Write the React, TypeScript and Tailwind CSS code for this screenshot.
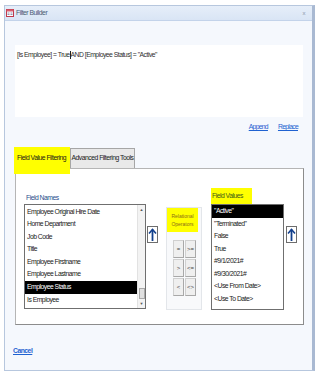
import React from 'react';

const fieldNames = [
  'Employee Original Hire Date',
  'Home Department',
  'Job Code',
  'Title',
  'Employee Firstname',
  'Employee Lastname',
  'Employee Status',
  'Is Employee',
];

const fieldValues = [
  '"Active"',
  '"Terminated"',
  'False',
  'True',
  '#9/1/2021#',
  '#9/30/2021#',
  '<Use From Date>',
  '<Use To Date>',
];

const operators = ['=', '>=', '>', '<=', '<', '<>'];

function ArrowButton() {
  return (
    <div className="w-[11px] h-[17px] border border-[#6d6d6d] bg-white flex items-center justify-center">
      <svg width="9" height="14" viewBox="0 0 9 14">
        <path d="M4.5 1.5 L4.5 13" stroke="#123f8c" strokeWidth="1.8" />
        <path d="M1 5.5 L4.5 1.5 L8 5.5" stroke="#123f8c" strokeWidth="1.6" fill="none" />
      </svg>
    </div>
  );
}

function FormIcon() {
  return (
    <svg width="8" height="8" viewBox="0 0 8 8">
      <rect x="0.5" y="0.5" width="7" height="7" fill="#fff" stroke="#c0394b" />
      <rect x="0.5" y="0.5" width="7" height="2" fill="#d65b6c" />
      <path d="M1.5 4h2M1.5 5.5h2M4.5 4h2M4.5 5.5h2" stroke="#7a7a9a" strokeWidth="0.8" />
    </svg>
  );
}

export default function App() {
  return (
    <div className="w-[320px] h-[381px] bg-white pt-[5px] pl-[4px] font-['Liberation_Sans',Arial,sans-serif] text-[6.8px] tracking-[-0.5px]">
      <div className="w-[311px] h-[366px] border border-[#b7c7de] border-r-[3px] border-r-[#a9b9d2] bg-[#f5f8fd] flex flex-col">
        {/* Title bar */}
        <div className="h-[15px] shrink-0 bg-gradient-to-b from-[#e6eef9] to-[#d9e5f5] border-b border-[#c3d3ea] flex items-center pl-[1px] pr-[7px]">
          <FormIcon />
          <span className="ml-[2px] text-[#4a5a74]">Filter Builder</span>
          <span className="ml-auto text-[6px] text-[#8a96a8]">x</span>
        </div>

        {/* Expression box */}
        <div className="mt-[24px] ml-[10px] w-[288px] h-[72px] bg-white px-[2px] pt-[5px]">
          <p className="text-[#2e2e2e] leading-[10px] whitespace-nowrap">
            [Is Employee] = True<span className="inline-block w-[1px] h-[8px] bg-[#222] align-middle" />AND [Employee Status] = "Active"
          </p>
        </div>

        {/* Append / Replace */}
        <div className="mt-[5px] flex justify-end gap-[10px] pr-[14px] text-[#1f62d1] underline leading-[10px] tracking-[-0.7px]">
          <span>Append</span>
          <span>Replace</span>
        </div>

        {/* Tabs */}
        <div className="mt-[15px] ml-[9px] h-[21px] flex items-start">
          <div className="relative z-10 w-[56px] h-[27px] bg-[#ffff00] pt-[6px] pl-[3px] text-[#1a1a1a] leading-[10px] whitespace-nowrap">
            Field Value Filtering
          </div>
          <div className="mt-[1px] w-[65px] h-[20px] bg-[#e9e9e9] border border-[#a6a6a6] border-b-0 flex items-center justify-center text-[#1a1a1a] whitespace-nowrap">
            Advanced Filtering Tools
          </div>
        </div>

        {/* Panel */}
        <div className="ml-[10px] w-[289px] h-[157px] bg-white border border-[#b5b5b5] border-r-[#8c8c8c] border-b-[#8c8c8c] flex items-start pl-[8px]">
          {/* Field names column */}
          <div className="mt-[23px] flex flex-col">
            <div className="h-[12px] pl-[2px] text-[#1f4e8c] leading-[12px]">Field Names</div>
            <div className="w-[122px] h-[105px] border border-[#6f6f6f] bg-white flex">
              <div className="flex-1 pt-[0.5px]">
                {fieldNames.map((n) => (
                  <div
                    key={n}
                    className={`h-[12.6px] pl-[2px] leading-[12.6px] whitespace-nowrap ${
                      n === 'Employee Status' ? 'bg-black text-white' : 'text-[#1a1a1a]'
                    }`}
                  >
                    {n}
                  </div>
                ))}
              </div>
              <div className="w-[8px] bg-[#f3f3f3] border-l border-[#e2e2e2] flex flex-col items-center">
                <span className="mt-[3px] text-[4px] text-[#555] leading-[4px] tracking-normal">▲</span>
                <div className="mt-auto w-[6px] h-[11px] bg-[#e0e0e0] border border-[#a9a9a9]" />
                <span className="mt-[3px] mb-[2px] text-[4px] text-[#555] leading-[4px] tracking-normal">▼</span>
              </div>
            </div>
          </div>

          <div className="mt-[57px] ml-[1px]">
            <ArrowButton />
          </div>

          {/* Relational operators */}
          <div className="mt-[38px] ml-[8px] w-[36px] h-[103px] border border-[#e3e6ea] bg-[#f8f9fb] flex flex-col">
            <div className="w-[31px] h-[24px] bg-[#ffff00] flex flex-col items-center justify-center text-[5px] tracking-normal leading-[8px] text-[#8a6d1a]">
              <span>Relational</span>
              <span>Operators</span>
            </div>
            <div className="mt-[8px] ml-[6px] grid grid-cols-[11px_11px] gap-[1px]">
              {operators.map((o) => (
                <div
                  key={o}
                  className="h-[18px] bg-[#efefef] border border-[#d0d0d0] border-b-[#a8a8a8] border-r-[#a8a8a8] flex items-center justify-center text-[6px] tracking-normal text-[#444]"
                >
                  {o}
                </div>
              ))}
            </div>
          </div>

          {/* Field values column */}
          <div className="mt-[19px] ml-[9px] flex flex-col">
            <div className="self-start h-[16px] w-[41px] bg-[#ffff00] pl-[1px] text-[#3d5a1a] leading-[16px]">Field Values</div>
            <div className="w-[73px] h-[106px] border border-[#6f6f6f] bg-white">
              {fieldValues.map((v) => (
                <div
                  key={v}
                  className={`h-[12.5px] pl-[2px] leading-[12.5px] whitespace-nowrap ${
                    v === '"Active"' ? 'bg-black text-white' : 'text-[#1a1a1a]'
                  }`}
                >
                  {v}
                </div>
              ))}
            </div>
          </div>

          <div className="mt-[57px] ml-[2px]">
            <ArrowButton />
          </div>
        </div>

        {/* Cancel */}
        <div className="mt-[21px] ml-[8px] font-bold text-[#1f62d1] underline leading-[10px]">Cancel</div>
      </div>
    </div>
  );
}
